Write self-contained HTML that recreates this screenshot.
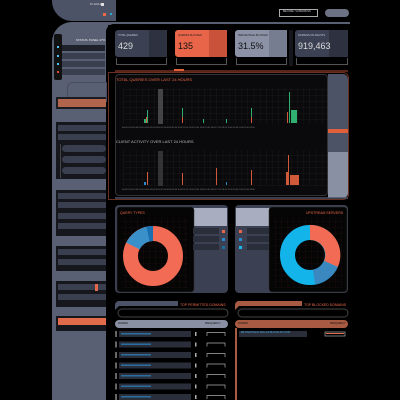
<!DOCTYPE html>
<html><head><style>
*{margin:0;padding:0;box-sizing:border-box}
body{width:400px;height:400px;background:#000;position:relative;overflow:hidden;font-family:"Liberation Sans",sans-serif;font-size:3px;color:#c8ccd8}
div{position:absolute}
.t{font-size:3px;white-space:nowrap;line-height:1}
.row{background:#3a3f4f;height:6px}
.o{color:#f06a4a}
</style></head><body>
<!-- top header shape -->
<div style="left:52px;top:0;width:64px;height:21px;background:#4d5367;border-radius:0 0 0 20px"></div>
<div class="t" style="left:90px;top:3px;color:#ddd">PI-HOLE</div>
<div style="left:101px;top:3px;width:3px;height:3px;background:#ddd"></div>
<div style="left:103px;top:13px;width:3px;height:3px;background:#f06a4a"></div>
<div style="left:110px;top:13px;width:2px;height:2px;background:#29a3d8"></div>
<div style="left:279px;top:9px;width:39px;height:8px;border:1px solid #aaa"></div>
<div class="t" style="left:283px;top:11px;font-size:2.5px">BECOME: SUPERNOVA</div>
<div style="left:325px;top:9px;width:24px;height:8px;background:#6c7284;border-radius:4px"></div>
<!-- sidebar -->
<div style="left:52px;top:22px;width:56px;height:378px;background:#5a6074;border-radius:20px 0 0 0"></div>
<div style="left:106px;top:22px;width:244px;height:3px;background:#5a6074"></div>
<div style="left:106px;top:24px;width:294px;height:376px;background:#000;border-radius:8px 0 0 0"></div>
<div style="left:54px;top:34px;width:8px;height:46px;background:#111;border-radius:2px"></div>
<div style="left:57px;top:46px;width:2px;height:2px;background:#4ec3f0"></div>
<div style="left:57px;top:55px;width:2px;height:2px;background:#4ec3f0"></div>
<div style="left:57px;top:63px;width:2px;height:2px;background:#4ec3f0"></div>
<div style="left:57px;top:71px;width:2px;height:2px;background:#e05030"></div>
<div class="t" style="left:76px;top:39px;color:#eee">STATUS: PANEL 47%</div>
<div class="row" style="left:62px;top:45px;width:43px;background:#1e2129"></div>
<div class="row" style="left:62px;top:53px;width:43px"></div>
<div class="row" style="left:62px;top:61px;width:43px"></div>
<div class="row" style="left:62px;top:69px;width:43px"></div>
<div style="left:67px;top:82px;width:40px;height:20px;border:1px solid #474c5e;border-radius:6px 0 0 0"></div>
<div style="left:56px;top:97px;width:50px;height:12px;background:#1a1c22"></div>
<div style="left:58px;top:99px;width:48px;height:8px;background:#b0654c"></div>
<div style="left:56px;top:122px;width:50px;height:57px;background:#15171d"></div>
<div class="row" style="left:58px;top:125px;width:48px"></div>
<div class="row" style="left:58px;top:134px;width:48px"></div>
<div style="left:60px;top:144px;width:46px;height:34px;border-left:1px solid #444"></div>
<div style="left:62px;top:145px;width:44px;height:7px;background:#3a3f4f;border-radius:4px"></div>
<div style="left:62px;top:156px;width:44px;height:7px;background:#3a3f4f;border-radius:4px"></div>
<div style="left:62px;top:167px;width:44px;height:7px;background:#3a3f4f;border-radius:4px"></div>
<div style="left:56px;top:190px;width:50px;height:46px;background:#15171d"></div>
<div class="row" style="left:58px;top:193px;width:48px"></div>
<div class="row" style="left:58px;top:202px;width:48px"></div>
<div class="row" style="left:58px;top:213px;width:48px"></div>
<div class="row" style="left:58px;top:223px;width:48px"></div>
<div style="left:56px;top:246px;width:50px;height:25px;background:#15171d"></div>
<div class="row" style="left:58px;top:249px;width:48px"></div>
<div class="row" style="left:58px;top:259px;width:48px"></div>
<div style="left:56px;top:281px;width:50px;height:26px;background:#15171d"></div>
<div class="row" style="left:58px;top:284px;width:48px"></div>
<div style="left:95px;top:284px;width:3px;height:7px;background:#e06a4a"></div>
<div class="row" style="left:58px;top:294px;width:48px"></div>
<div style="left:56px;top:316px;width:50px;height:15px;background:#15171d"></div>
<div style="left:58px;top:318px;width:48px;height:7px;background:#e06a4a"></div>
<!-- stat cards -->
<div style="left:115px;top:30px;width:52px;height:27px;background:#3b4052;border-radius:3px"></div>
<div style="left:149px;top:30px;width:18px;height:27px;background:#2e3240"></div>
<div class="t" style="left:118px;top:35px;font-size:2.5px">TOTAL QUERIES</div>
<div class="t" style="left:118px;top:42px;font-size:9px;color:#ddd">429</div>
<div style="left:175px;top:30px;width:52px;height:27px;background:#e8654a;border-radius:3px"></div>
<div style="left:209px;top:30px;width:18px;height:27px;background:#c9533a"></div>
<div class="t" style="left:178px;top:35px;font-size:2.5px;color:#222">QUERIES BLOCKED</div>
<div class="t" style="left:178px;top:42px;font-size:9px;color:#111">135</div>
<div style="left:235px;top:30px;width:52px;height:27px;background:#8c92a6;border-radius:3px"></div>
<div style="left:269px;top:30px;width:18px;height:27px;background:#777d90"></div>
<div class="t" style="left:238px;top:35px;font-size:2.5px;color:#222">PERCENTAGE BLOCKED</div>
<div class="t" style="left:238px;top:42px;font-size:9px;color:#111">31.5%</div>
<div style="left:295px;top:30px;width:53px;height:27px;background:#3b4052;border-radius:3px"></div>
<div style="left:329px;top:30px;width:19px;height:27px;background:#2e3240"></div>
<div class="t" style="left:298px;top:35px;font-size:2.5px">DOMAINS ON ADLISTS</div>
<div class="t" style="left:298px;top:42px;font-size:9px;color:#ddd">919,463</div>
<div style="left:116px;top:58px;width:51px;height:7px;border:1px solid #555;border-top:none"></div>
<div style="left:176px;top:58px;width:51px;height:7px;border:1px solid #555;border-top:none"></div>
<div style="left:236px;top:58px;width:51px;height:7px;border:1px solid #555;border-top:none"></div>
<div style="left:296px;top:58px;width:52px;height:7px;border:1px solid #555;border-top:none"></div>
<div style="left:289px;top:30px;width:4px;height:36px;background:#14161c"></div>
<div style="left:115px;top:70px;width:233px;height:2px;background:#5a2418"></div>
<div style="left:174px;top:69px;width:10px;height:2px;background:#e0603c"></div>
<!-- chart panel -->
<div style="left:108px;top:72px;width:241px;height:128px;border:1px solid #6a3020;border-radius:0 6px 6px 0"></div>
<div style="left:328px;top:74px;width:20px;height:124px;background:#4d5367;border-radius:0 5px 5px 0"></div>
<div style="left:328px;top:129px;width:20px;height:4px;background:#e0603c"></div>
<div style="left:328px;top:152px;width:20px;height:46px;background:#8a90a3;border-radius:0 0 5px 0"></div>
<div style="left:115px;top:74px;width:213px;height:122px;background:#0a0a0c;border:1px solid #333;border-radius:4px"></div>
<div class="t o" style="left:116px;top:78px;font-size:4px">TOTAL QUERIES OVER LAST 24 HOURS</div>
<div class="t o" style="left:116px;top:140px;font-size:4px;color:#bbb">CLIENT ACTIVITY OVER LAST 24 HOURS</div>
<svg style="position:absolute;left:0;top:0" width="400" height="400">
<defs><pattern id="g" width="6.2" height="6" patternUnits="userSpaceOnUse"><path d="M6.2 0V6H0" fill="none" stroke="#262626" stroke-width=".5"/></pattern>
<pattern id="r" width="6" height="6" patternUnits="userSpaceOnUse"><path d="M6 0V6H0" fill="none" stroke="#2a1410" stroke-width=".5"/></pattern></defs>
<rect x="123" y="88" width="204" height="36" fill="url(#g)"/>
<rect x="123" y="150" width="204" height="36" fill="url(#g)"/>
<rect x="158" y="89" width="5" height="35" fill="#444"/>
<rect x="158" y="151" width="5" height="35" fill="#333"/>
<g fill="#2fb070"><rect x="147" y="110" width="1" height="13"/><rect x="182" y="108" width="1" height="15"/><rect x="251" y="108" width="1" height="15"/><rect x="289" y="92" width="1" height="31"/><rect x="291" y="110" width="6" height="13"/><rect x="144" y="119" width="2" height="4"/><rect x="203" y="119" width="1" height="4"/><rect x="226" y="119" width="1" height="4"/></g>
<g fill="#d05a3a"><rect x="146" y="117" width="1" height="6"/><rect x="182" y="117" width="1" height="6"/><rect x="251" y="117" width="1" height="6"/><rect x="287" y="112" width="1" height="11"/><rect x="147" y="172" width="1" height="13"/><rect x="182" y="173" width="1" height="12"/><rect x="216" y="168" width="1" height="17"/><rect x="251" y="170" width="1" height="15"/><rect x="288" y="155" width="1" height="30"/><rect x="286" y="172" width="2" height="13"/><rect x="290" y="175" width="9" height="10"/></g>
<rect x="144" y="182" width="2" height="3" fill="#2a8ad0"/><rect x="226" y="182" width="1" height="3" fill="#2a8ad0"/>
<g fill="#888" font-size="2" font-family="Liberation Sans"><text x="122" y="128">00:00 01:00 02:00 03:00 04:00 05:00 06:00 07:00 08:00 09:00 10:00 11:00 12:00 13:00 14:00 15:00 16:00 17:00 18:00 19:00 20:00 21:00 22:00 23:00</text><text x="122" y="190">00:00 01:00 02:00 03:00 04:00 05:00 06:00 07:00 08:00 09:00 10:00 11:00 12:00 13:00 14:00 15:00 16:00 17:00 18:00 19:00 20:00 21:00 22:00 23:00</text></g>
<line x1="115" y1="198" x2="348" y2="198" stroke="#4d5367" stroke-width="1.5"/>
<!-- query types -->
<rect x="115" y="205" width="113" height="88" rx="4" fill="#3b4052"/>
<rect x="193" y="208" width="34" height="18" fill="#a8aebf"/>
<rect x="117" y="207" width="77" height="85" rx="3" fill="#050505" stroke="#333" stroke-width=".5"/>
<rect x="122" y="218" width="66" height="70" fill="url(#r)"/>
<g fill="#2a2e3a"><rect x="193" y="228" width="26" height="6"/><rect x="193" y="236" width="26" height="6"/><rect x="193" y="244" width="26" height="6"/></g>
<rect x="222" y="230" width="3" height="3" fill="#e8654a"/><rect x="222" y="238" width="3" height="3" fill="#2a8ad0"/><rect x="222" y="246" width="3" height="3" fill="#1a70a0"/>
<circle cx="153" cy="256" r="22.5" fill="none" stroke="#f26b54" stroke-width="15"/>
<path d="M153 233.5 A22.5 22.5 0 0 0 133 246" fill="none" stroke="#3a90c8" stroke-width="15"/>
<path d="M153 233.5 A22.5 22.5 0 0 0 148 234" fill="none" stroke="#1a6fb0" stroke-width="15"/>
<text x="120" y="214" font-size="3.5" fill="#f06a4a" font-family="Liberation Sans">QUERY TYPES</text>
<!-- upstream -->
<rect x="235" y="205" width="113" height="88" rx="4" fill="#3b4052"/>
<rect x="236" y="208" width="34" height="18" fill="#a8aebf"/>
<rect x="269" y="207" width="78" height="85" rx="3" fill="#050505" stroke="#333" stroke-width=".5"/>
<rect x="274" y="218" width="68" height="70" fill="url(#r)"/>
<g fill="#2a2e3a"><rect x="247" y="228" width="22" height="6"/><rect x="247" y="236" width="22" height="6"/><rect x="247" y="244" width="22" height="6"/></g>
<rect x="239" y="230" width="3" height="3" fill="#e8654a"/><rect x="239" y="238" width="3" height="3" fill="#2a8ad0"/><rect x="239" y="246" width="3" height="3" fill="#1ab8f0"/>
<circle cx="310" cy="255" r="22.5" fill="none" stroke="#12b4ea" stroke-width="15"/>
<path d="M310 232.5 A22.5 22.5 0 0 1 331 264" fill="none" stroke="#f26b54" stroke-width="15"/>
<path d="M331 264 A22.5 22.5 0 0 1 314 277" fill="none" stroke="#3a88c0" stroke-width="15"/>
<text x="306" y="214" font-size="3.5" fill="#f06a4a" font-family="Liberation Sans">UPSTREAM SERVERS</text>
<!-- tables -->
<path d="M115 310 V305 a4 4 0 0 1 4 -4 H178 V306 H119 Z" fill="#4d5367"/>
<text x="180" y="306" font-size="3.5" fill="#f06a4a" font-family="Liberation Sans">TOP PERMITTED DOMAINS</text>
<rect x="118" y="309" width="110" height="8" rx="4" fill="none" stroke="#444"/>
<rect x="115" y="320" width="113" height="8" rx="4" fill="#8a90a3"/>
<path d="M235 310 V305 a4 4 0 0 1 4 -4 H302 V306 H239 Z" fill="#a85a42"/>
<text x="304" y="306" font-size="3.5" fill="#f06a4a" font-family="Liberation Sans">TOP BLOCKED DOMAINS</text>
<rect x="238" y="309" width="110" height="8" rx="4" fill="none" stroke="#444"/>
<rect x="235" y="320" width="113" height="8" rx="4" fill="#a85a42"/>
<rect x="235" y="328" width="2" height="72" fill="#a85a42"/>
<rect x="239" y="331" width="68" height="6" fill="#2a2e3a"/>
<rect x="325" y="332" width="20" height="4" fill="none" stroke="#aaa" stroke-width=".7"/><rect x="326" y="333" width="18" height="1" fill="#e06a4a"/>
</svg>
<div class="t" style="left:118px;top:323px;color:#111;font-size:2.5px">DOMAIN</div>
<div class="t" style="left:205px;top:323px;color:#111;font-size:2.5px">FREQUENCY</div>
<div class="t" style="left:238px;top:323px;color:#111;font-size:2.5px">DOMAIN</div>
<div class="t" style="left:330px;top:323px;color:#111;font-size:2.5px">FREQUENCY</div>
<div class="t" style="left:241px;top:332px;color:#4aa8e0;font-size:2.5px">BETTERSTACK.DALLAS.BLOCKLIST.COM</div>
<svg style="position:absolute;left:115px;top:330px" width="113" height="70">
<g id="rr"><rect x="0" y="1" width="2" height="6" fill="#666"/><rect x="4" y="1" width="72" height="6" fill="#2a2e3a"/><rect x="6" y="3" width="30" height="1.5" fill="#2a6fa0"/><rect x="80" y="2" width="1.5" height="4" fill="#aaa"/><path d="M92 6V2.5H110V6" fill="none" stroke="#aaa" stroke-width=".7"/></g>
<use href="#rr" y="10.5"/><use href="#rr" y="21"/><use href="#rr" y="31.5"/><use href="#rr" y="42"/><use href="#rr" y="52.5"/><use href="#rr" y="63"/>
</svg>
</body></html>
